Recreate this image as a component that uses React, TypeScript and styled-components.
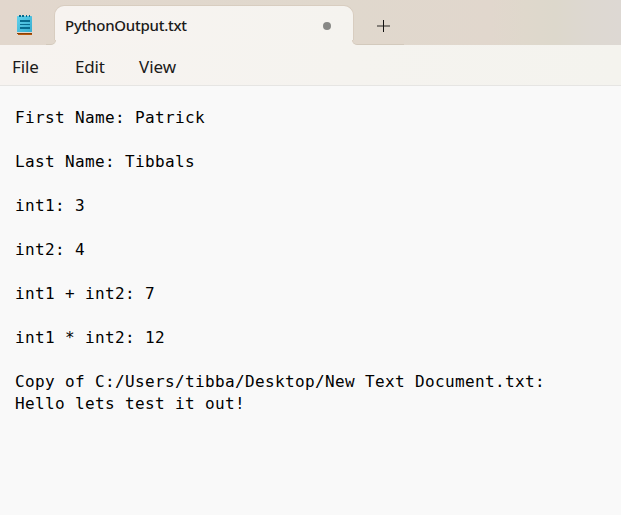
import React from 'react';
import styled, { createGlobalStyle } from 'styled-components';

const GlobalStyle = createGlobalStyle`
  *, *::before, *::after { box-sizing: border-box; }
  body { margin: 0; background: #f9f9f9; overflow: hidden; }
`;

const Window = styled.main`
  display: flex;
  flex-direction: column;
  height: 100vh;
  color: #1b1a19;
  font-family: 'Noto Sans', 'Open Sans', sans-serif;
`;

const TitleBar = styled.header`
  display: flex;
  align-items: flex-end;
  flex: none;
  height: 45px;
  background: linear-gradient(90deg, #e2d7cd 0, #e0d8cd 350px, #e1d7cd 490px, #dfd8cc 525px, #ddd8cc 555px, #ddd8d1 590px, #ddd8d3 100%);
`;

const AppIcon = styled.svg`
  flex: none;
  width: 18px;
  height: 22px;
  margin: 0 20px 9px 16px;
`;

const Tab = styled.div`
  position: relative;
  display: flex;
  align-items: center;
  justify-content: space-between;
  flex: none;
  width: 300px;
  height: 40px;
  padding: 0 22px 0 10px;
  border: 1px solid #d8cdc0;
  border-bottom: 0;
  border-radius: 10px 10px 0 0;
  background: linear-gradient(90deg, #f7f3f0, #f5f3ef);
`;

const Flare = styled.span<{ $side: 'left' | 'right' }>`
  position: absolute;
  bottom: 0;
  ${({ $side }) => ($side === 'left' ? 'right: 100%;' : 'left: 100%;')}
  width: ${({ $side }) => ($side === 'left' ? 10 : 52)}px;
  height: 5px;
  margin: 0 -1px;
  background: #f6f3ef;

  &::before {
    content: '';
    display: block;
    height: 5px;
    border-bottom: 1px solid #d3c9bc;
    border-${({ $side }) => ($side === 'left' ? 'right' : 'left')}: 1px solid #d8cdc0;
    border-bottom-${({ $side }) => ($side === 'left' ? 'right' : 'left')}-radius: 5px;
    background: #e1d7cc;
  }
`;

const TabTitle = styled.span`
  margin-top: -2px;
  font-size: 15px;
  font-weight: 500;
  line-height: 20px;
  letter-spacing: -0.25px;
`;

const UnsavedDot = styled.span`
  width: 8px;
  height: 8px;
  margin-right: 0.5px;
  border-radius: 50%;
  background: #888886;
`;

const NewTabIcon = styled.svg`
  flex: none;
  width: 14px;
  height: 14px;
  margin: 0 0 12px 23px;
`;

const MenuBar = styled.nav`
  display: flex;
  flex: none;
  height: 41px;
  padding-left: 12px;
  border-bottom: 1px solid #e6e5e3;
  background: linear-gradient(90deg, #f7f3f0 0, #f5f3ef 350px, #f4f3ee 100%);
`;

const MenuItem = styled.span<{ $width: number; $spacing: number }>`
  width: ${({ $width }) => $width}px;
  font-size: 17px;
  line-height: 43px;
  letter-spacing: ${({ $spacing }) => $spacing}px;
`;

const Editor = styled.pre`
  flex: 1;
  margin: 0;
  padding: 21px 15px 0;
  background: #f9f9f9;
  color: #000;
  font: 16px/22px 'DejaVu Sans Mono', monospace;
  letter-spacing: 0.367px;
`;

const documentText = `First Name: Patrick

Last Name: Tibbals

int1: 3

int2: 4

int1 + int2: 7

int1 * int2: 12

Copy of C:/Users/tibba/Desktop/New Text Document.txt:
Hello lets test it out!`;

export default function App() {
  return (
    <Window>
      <GlobalStyle />
      <TitleBar>
        <AppIcon viewBox="0 0 18 22">
          <defs>
            <linearGradient id="page" x1="0" y1="0" x2="1" y2="1">
              <stop offset="0" stopColor="#62d2ec" />
              <stop offset="1" stopColor="#36add0" />
            </linearGradient>
          </defs>
          <path d="M1 19h15v2H2v-1H1z" fill="#b8580a" />
          <path d="M1 19h15v1H1z" fill="#874009" />
          <rect x="1" y="2" width="15" height="16" rx=".5" fill="url(#page)" />
          <path d="M3 1h2v2H3zM6 1h2v2H6zM10 1h1v2h-1zM13 1h1v2h-1z" fill="#08698c" />
          <path d="M4 6h10v2H4zM4 10h10v1H4zM4 13h10v2H4z" fill="#086b8e" />
        </AppIcon>
        <Tab>
          <Flare $side="left" />
          <TabTitle>PythonOutput.txt</TabTitle>
          <UnsavedDot />
          <Flare $side="right" />
        </Tab>
        <NewTabIcon viewBox="0 0 14 14">
          <path d="M0 7h13" stroke="#858079" strokeWidth="2" />
          <path d="M6.5 1v12" stroke="#111" />
        </NewTabIcon>
      </TitleBar>
      <MenuBar>
        <MenuItem $width={63} $spacing={-0.1}>File</MenuItem>
        <MenuItem $width={64} $spacing={-0.2}>Edit</MenuItem>
        <MenuItem $width={60} $spacing={0}>View</MenuItem>
      </MenuBar>
      <Editor>{documentText}</Editor>
    </Window>
  );
}
